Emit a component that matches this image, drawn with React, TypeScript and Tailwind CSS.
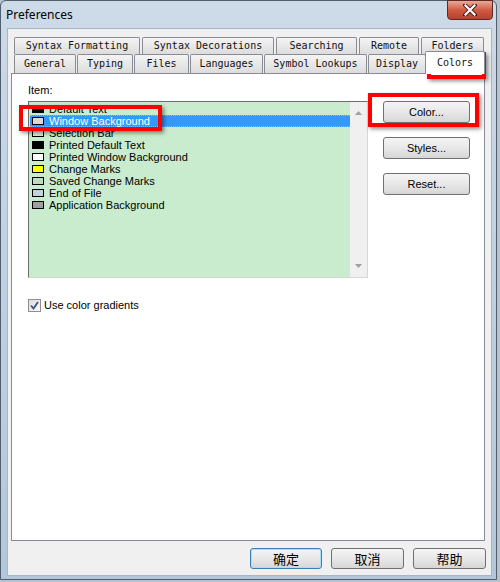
import React from "react";

const row1: [string, number][] = [
  ["Syntax Formatting", 126],
  ["Syntax Decorations", 132],
  ["Searching", 81],
  ["Remote", 60],
  ["Folders", 63],
];
const row2: [string, number][] = [
  ["General", 62],
  ["Typing", 56],
  ["Files", 55],
  ["Languages", 73],
  ["Symbol Lookups", 103],
  ["Display", 58],
];

const items: [string, string][] = [
  ["Default Text", "#000000"],
  ["Window Background", "#d8d8d8"],
  ["Selection Bar", "#e4e4e4"],
  ["Printed Default Text", "#000000"],
  ["Printed Window Background", "#ffffff"],
  ["Change Marks", "#ffff00"],
  ["Saved Change Marks", "#c0dcc0"],
  ["End of File", "#c0d4e0"],
  ["Application Background", "#a0a0a0"],
];

const mono = { fontFamily: '"DejaVu Sans Mono", "Liberation Mono", monospace' };
const sans = { fontFamily: '"Liberation Sans", Arial, sans-serif' };

function Tab({ label, w }: { label: string; w: number }) {
  return (
    <div
      className="h-full flex items-center justify-center border border-b-0 border-[#898c95] rounded-t-[2px] bg-gradient-to-b from-[#f4f4f4] to-[#dcdcdc] text-[10px] text-[#111] leading-none"
      style={{ width: w, ...mono }}
    >
      {label}
    </div>
  );
}

function Btn({ label }: { label: string }) {
  return (
    <div
      className="flex items-center justify-center rounded-[3px] border border-[#707070] text-[11px] text-black bg-gradient-to-b from-[#f4f4f4] via-[#e8e8e8] to-[#d6d6d6]"
      style={{ width: 87, height: 22, ...sans }}
    >
      {label}
    </div>
  );
}

function DlgBtn({ label, focus, w }: { label: string; focus?: boolean; w: number }) {
  return (
    <div
      className={
        "flex items-center justify-center rounded-[3px] border text-[13px] text-black bg-gradient-to-b from-[#f4f4f4] via-[#e8e8e8] to-[#d6d6d6] " +
        (focus ? "border-[#3c7fb1] shadow-[inset_0_0_0_1px_#a6dff7]" : "border-[#707070]")
      }
      style={{ width: w, height: 21, fontFamily: '"Noto Sans CJK SC", sans-serif' }}
    >
      {label}
    </div>
  );
}

export default function App() {
  return (
    <div className="relative w-[500px] h-[582px] overflow-hidden bg-[#b7c2cc]">
      <div className="w-[497px] h-[580px] rounded-t-[6px] border border-[#4f5f70] bg-gradient-to-b from-[#cddae7] via-[#bfd0e0] to-[#b4c7da] flex flex-col">
        {/* title bar */}
        <div className="relative h-[27px] flex items-center pl-[5px]">
          <span className="text-[12px] text-black" style={{ fontFamily: '"Noto Sans", "Open Sans", sans-serif' }}>
            Preferences
          </span>
          <div className="absolute right-[3px] top-[-1px] w-[46px] h-[20px] rounded-b-[4px] border border-[#5c2a22] bg-gradient-to-b from-[#e9a99b] via-[#d05a44] to-[#b8402d] flex items-center justify-center">
            <svg width="14" height="12" viewBox="0 0 14 12">
              <path d="M2 1 L12 11 M12 1 L2 11" stroke="#4a1a14" strokeWidth="4" strokeLinecap="square" />
              <path d="M2.5 1.5 L11.5 10.5 M11.5 1.5 L2.5 10.5" stroke="#ffffff" strokeWidth="2.2" strokeLinecap="square" />
            </svg>
          </div>
        </div>
        {/* client */}
        <div className="ml-[6px] w-[485px] h-[548px] border border-[#a4b6c8] bg-[#f0f0f0] flex flex-col">
          {/* tabs */}
          <div className="pt-[8px] pl-[6px] flex flex-col">
            <div className="flex gap-[2px] h-[17px]">
              {row1.map(([l, w]) => (
                <Tab key={l} label={l} w={w} />
              ))}
            </div>
            <div className="flex gap-[1px] h-[19px] items-end">
              {row2.map(([l, w]) => (
                <Tab key={l} label={l} w={w} />
              ))}
              <div
                className="relative z-10 -ml-[2px] h-[23px] mb-[-1px] w-[60px] flex items-center justify-center border border-b-0 border-[#898c95] rounded-t-[2px] bg-white text-[10px] text-[#111] leading-none"
                style={mono}
              >
                Colors
              </div>
            </div>
          </div>
          {/* panel */}
          <div className="ml-[3px] w-[474px] h-[468px] border border-[#898c95] bg-white flex pl-[16px] pt-[10px]">
            <div className="flex flex-col">
              <div className="h-[13px] leading-[13px] text-[11px] text-black" style={sans}>
                Item:
              </div>
              <div className="mt-[4px] w-[340px] h-[177px] flex border border-[#828790] border-l-[#6d6d6d] border-t-[#6d6d6d] border-b-[#d6d6d6] border-r-[#d6d6d6]">
                <div className="flex-1 bg-[#c9ecce] pt-[1px] pl-[1px]">
                  {items.map(([name, c], i) => (
                    <div
                      key={name}
                      className={
                        "h-[12px] flex items-center text-[11px] leading-none " +
                        (i === 1
                          ? "bg-[#3399ff] text-white border-y border-dotted border-[#f0a060]"
                          : "text-black")
                      }
                      style={sans}
                    >
                      <div className="ml-[2px] w-[12px] h-[8px] border border-black" style={{ background: c }} />
                      <span className="ml-[5px]">{name}</span>
                    </div>
                  ))}
                </div>
                <div className="w-[17px] bg-[#f0f0f0] flex flex-col items-center justify-between py-[9px]">
                  <svg width="7" height="4" viewBox="0 0 7 4">
                    <path d="M0 4 L3.5 0 L7 4 Z" fill="#a0a0a0" />
                  </svg>
                  <svg width="7" height="4" viewBox="0 0 7 4">
                    <path d="M0 0 L3.5 4 L7 0 Z" fill="#a0a0a0" />
                  </svg>
                </div>
              </div>
              <div className="mt-[19px] flex items-center">
                <div className="w-[13px] h-[13px] border border-[#8f8f8f] bg-gradient-to-br from-[#dcdcdc] to-[#fafafa] flex items-center justify-center">
                  <svg width="9" height="9" viewBox="0 0 9 9">
                    <path d="M1 4.5 L3.5 7.5 L8 1" stroke="#3a4f8f" strokeWidth="1.8" fill="none" />
                  </svg>
                </div>
                <span className="ml-[3px] text-[11px] text-black" style={sans}>
                  Use color gradients
                </span>
              </div>
            </div>
            <div className="ml-[15px] mt-[17px] flex flex-col gap-[14px]">
              <Btn label="Color..." />
              <Btn label="Styles..." />
              <Btn label="Reset..." />
            </div>
          </div>
          {/* bottom buttons */}
          <div className="mt-[7px] flex justify-end gap-[9px] pr-[5px]">
            <DlgBtn label="确定" focus w={72} />
            <DlgBtn label="取消" w={73} />
            <DlgBtn label="帮助" w={73} />
          </div>
        </div>
      </div>

      {/* red highlight boxes */}
      <div className="absolute left-[19px] top-[105px] w-[143px] h-[26px] border-[4px] border-[#ff0000] shadow-[2px_2px_4px_rgba(0,0,0,0.45)]" />
      <div className="absolute left-[427px] top-[52px] w-[59px] h-[27px] border-[4px] border-[#ff0000] shadow-[2px_2px_4px_rgba(0,0,0,0.45)]" />
      <div className="absolute left-[368px] top-[93px] w-[111px] h-[34px] border-[4px] border-[#ff0000] shadow-[2px_2px_4px_rgba(0,0,0,0.45)]" />
    </div>
  );
}
